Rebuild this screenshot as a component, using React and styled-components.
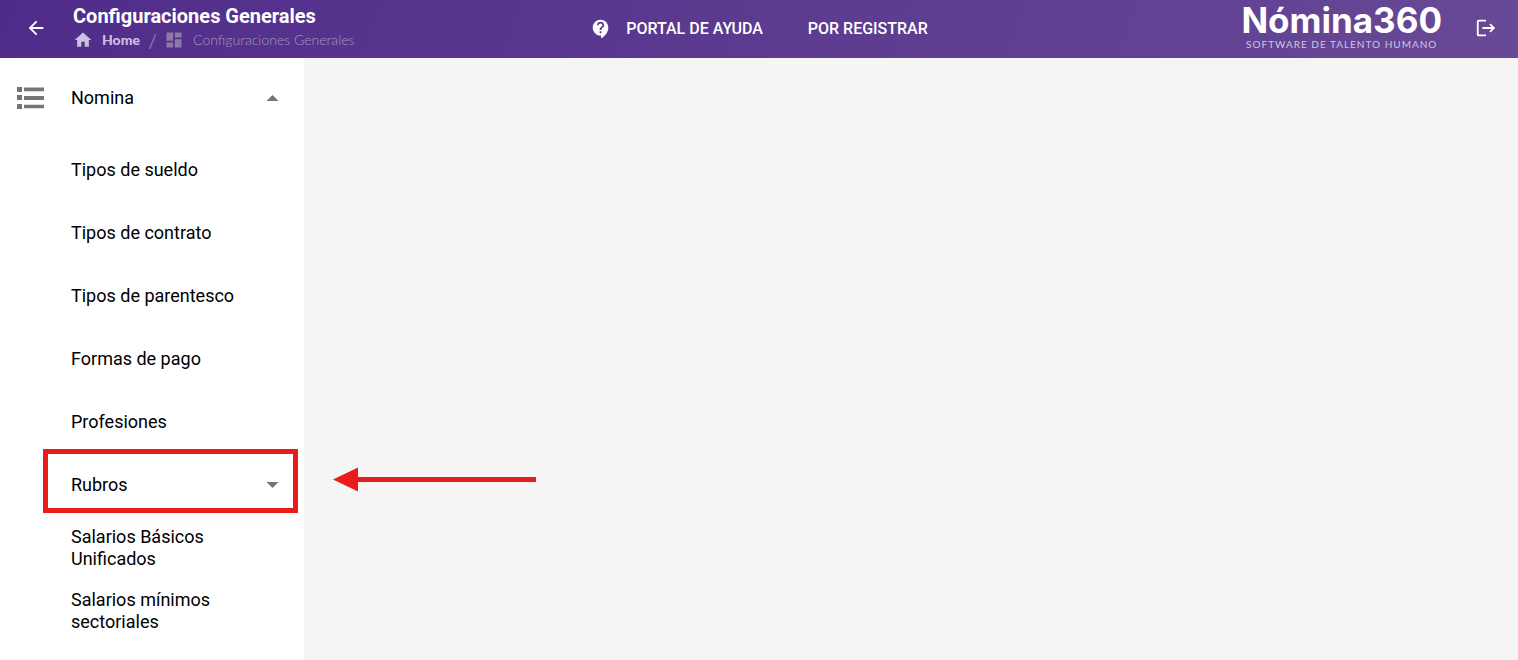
import styled, { createGlobalStyle, css } from 'styled-components';
import {
    MdArrowBack,
    MdContactSupport,
    MdDashboard,
    MdHome,
    MdLogout,
} from 'react-icons/md';

const MenuItems = [
    { title: 'Tipos de sueldo' },
    { title: 'Tipos de contrato' },
    { title: 'Tipos de parentesco' },
    { title: 'Formas de pago' },
    { title: 'Profesiones' },
    { title: 'Rubros', expandable: true, highlighted: true },
    { title: 'Salarios Básicos Unificados' },
    { title: 'Salarios mínimos sectoriales' },
];

const GlobalStyle = createGlobalStyle`
    *, *:before, *:after {
        box-sizing: border-box;
    }

    body {
        margin: 0;
        background: #f5f5f5;
        font-family: Roboto, sans-serif;
        color: #000;
    }

    #root {
        display: flex;
        flex-direction: column;
        min-height: 100vh;
    }
`;

const StyledHeader = styled.header`
    display: grid;
    grid-template-columns: 1fr auto 1fr;
    align-items: center;
    height: 58px;
    color: #fff;
    background: linear-gradient(110deg, #502c8a, #674996);
`;

const HeaderSide = styled.div`
    display: flex;
    align-items: center;
    justify-content: ${props => props.$end ? 'flex-end' : 'flex-start'};
    padding-bottom: 2px;
`;

const IconButton = styled.button`
    display: flex;
    padding: 0;
    border: 0;
    background: none;
    color: inherit;
    font-size: 22px;
    cursor: pointer;
`;

const BackButton = styled(IconButton)`
    margin: 0 26px 0 25px;
`;

const ExitButton = styled(IconButton)`
    margin: 0 21px 0 33px;
`;

const Title = styled.h1`
    margin: 0;
    font-weight: 700;
    font-size: 20px;
    line-height: 24px;
`;

const Breadcrumbs = styled.nav`
    display: flex;
    align-items: center;
    height: 24px;
    font-family: Lato, sans-serif;
    font-size: 14px;
    line-height: 24px;
    color: #8a76a6;
`;

const Crumb = styled.a`
    display: flex;
    align-items: center;
    gap: 9px;
    color: ${props => props.$current ? '#a797bb' : '#cdbfe0'};
    font-weight: ${props => props.$current ? 300 : 900};
    text-decoration: none;

    svg {
        font-size: 20px;
        color: ${props => props.$current ? '#8b7aa3' : '#cdbfe0'};
    }
`;

const Separator = styled.span`
    margin: 0 7px 0 8px;
    font-size: 20px;
`;

const HeaderNav = styled.nav`
    display: flex;
    align-items: center;
    gap: 45px;
`;

const NavLink = styled.a`
    display: flex;
    align-items: center;
    gap: 14px;
    color: #fff;
    font-weight: 500;
    font-size: 16px;
    line-height: 24px;
    text-decoration: none;

    svg {
        font-size: 22px;
    }
`;

const Logo = styled.a`
    display: flex;
    flex-direction: column;
    align-items: center;
    padding-bottom: 4px;
    color: #fff;
    font-family: Inter, sans-serif;
    font-weight: 700;
    font-size: 35px;
    line-height: 36px;
    text-decoration: none;
`;

const LogoTagline = styled.span`
    color: #d0c4e2;
    font-family: Lato, sans-serif;
    font-weight: 400;
    font-size: 10px;
    line-height: 12px;
    letter-spacing: 1px;
`;

const Layout = styled.div`
    display: flex;
    flex: 1;
`;

const Sidebar = styled.nav`
    flex: 0 0 304px;
    background: #fff;
`;

const row = css`
    display: flex;
    align-items: center;
    width: 100%;
    border: 0;
    background: none;
    color: #000;
    font-family: inherit;
    font-size: 18px;
    line-height: 22px;
    text-align: left;
    text-decoration: none;
    cursor: pointer;
`;

const SectionButton = styled.button`
    ${row}
    height: 80px;
    padding: 0 25px 0 16px;

    svg:first-child {
        margin-right: 26px;
    }
`;

const Menu = styled.ul`
    margin: 0;
    padding: 0;
    list-style: none;
`;

const MenuItem = styled.li`
    position: relative;
`;

const MenuRow = styled.a`
    ${row}
    height: 63px;
    padding: 0 25px 0 71px;
`;

const RowText = styled.span`
    flex: 1;
    max-width: 170px;
`;

const Caret = styled.svg`
    width: 13px;
    height: 6px;
    margin-left: auto;
    fill: #757575;
`;

const Highlight = styled.div`
    position: absolute;
    top: -4px;
    left: 43px;
    right: 6px;
    height: 64px;
    border: 5px solid #e81c1c;
    pointer-events: none;
`;

const Arrow = styled.svg`
    position: absolute;
    top: 14px;
    left: 333px;
    width: 203px;
    height: 26px;
    fill: #e81c1c;
    pointer-events: none;
`;

const Content = styled.main`
    flex: 1;
`;

const ListIcon = () => (
    <svg width="29" height="24" fill="#757575" aria-hidden="true">
        <path d="M1 1h5v5H1zM8 1.6h20v3.6H8zM1 9h5v5H1zM8 10h20v4H8zM1 18h5v5H1zM8 18.7h20v3.6H8z" />
    </svg>
);

const RowCaret = ({ open }) => (
    <Caret viewBox="0 0 12 6" aria-hidden="true">
        <path d={open ? 'M0 6L6 0L12 6z' : 'M0 0L6 6L12 0z'} />
    </Caret>
);

const App = () => {
    return (
        <>
            <GlobalStyle />
            <StyledHeader>
                <HeaderSide>
                    <BackButton type="button" aria-label="Regresar">
                        <MdArrowBack />
                    </BackButton>
                    <div>
                        <Title>Configuraciones Generales</Title>
                        <Breadcrumbs>
                            <Crumb href="/#">
                                <MdHome />
                                Home
                            </Crumb>
                            <Separator>/</Separator>
                            <Crumb href="/#" $current>
                                <MdDashboard />
                                Configuraciones Generales
                            </Crumb>
                        </Breadcrumbs>
                    </div>
                </HeaderSide>

                <HeaderNav>
                    <NavLink href="/#">
                        <MdContactSupport />
                        PORTAL DE AYUDA
                    </NavLink>
                    <NavLink href="/#">POR REGISTRAR</NavLink>
                </HeaderNav>

                <HeaderSide $end>
                    <Logo href="/#">
                        Nómina360
                        <LogoTagline>SOFTWARE DE TALENTO HUMANO</LogoTagline>
                    </Logo>
                    <ExitButton type="button" aria-label="Salir">
                        <MdLogout />
                    </ExitButton>
                </HeaderSide>
            </StyledHeader>

            <Layout>
                <Sidebar>
                    <SectionButton type="button">
                        <ListIcon />
                        <RowText>Nomina</RowText>
                        <RowCaret open />
                    </SectionButton>
                    <Menu>
                        {MenuItems.map(item => (
                            <MenuItem key={item.title}>
                                <MenuRow
                                    as={item.expandable ? 'button' : 'a'}
                                    href={item.expandable ? undefined : '/#'}
                                >
                                    <RowText>{item.title}</RowText>
                                    {item.expandable && <RowCaret />}
                                </MenuRow>
                                {item.highlighted && (
                                    <>
                                        <Highlight />
                                        <Arrow viewBox="0 0 203 26" aria-hidden="true">
                                            <path d="M0 12.5L25 0.5V10H203V15H25V24.5z" />
                                        </Arrow>
                                    </>
                                )}
                            </MenuItem>
                        ))}
                    </Menu>
                </Sidebar>
                <Content />
            </Layout>
        </>
    );
}

export default App;
